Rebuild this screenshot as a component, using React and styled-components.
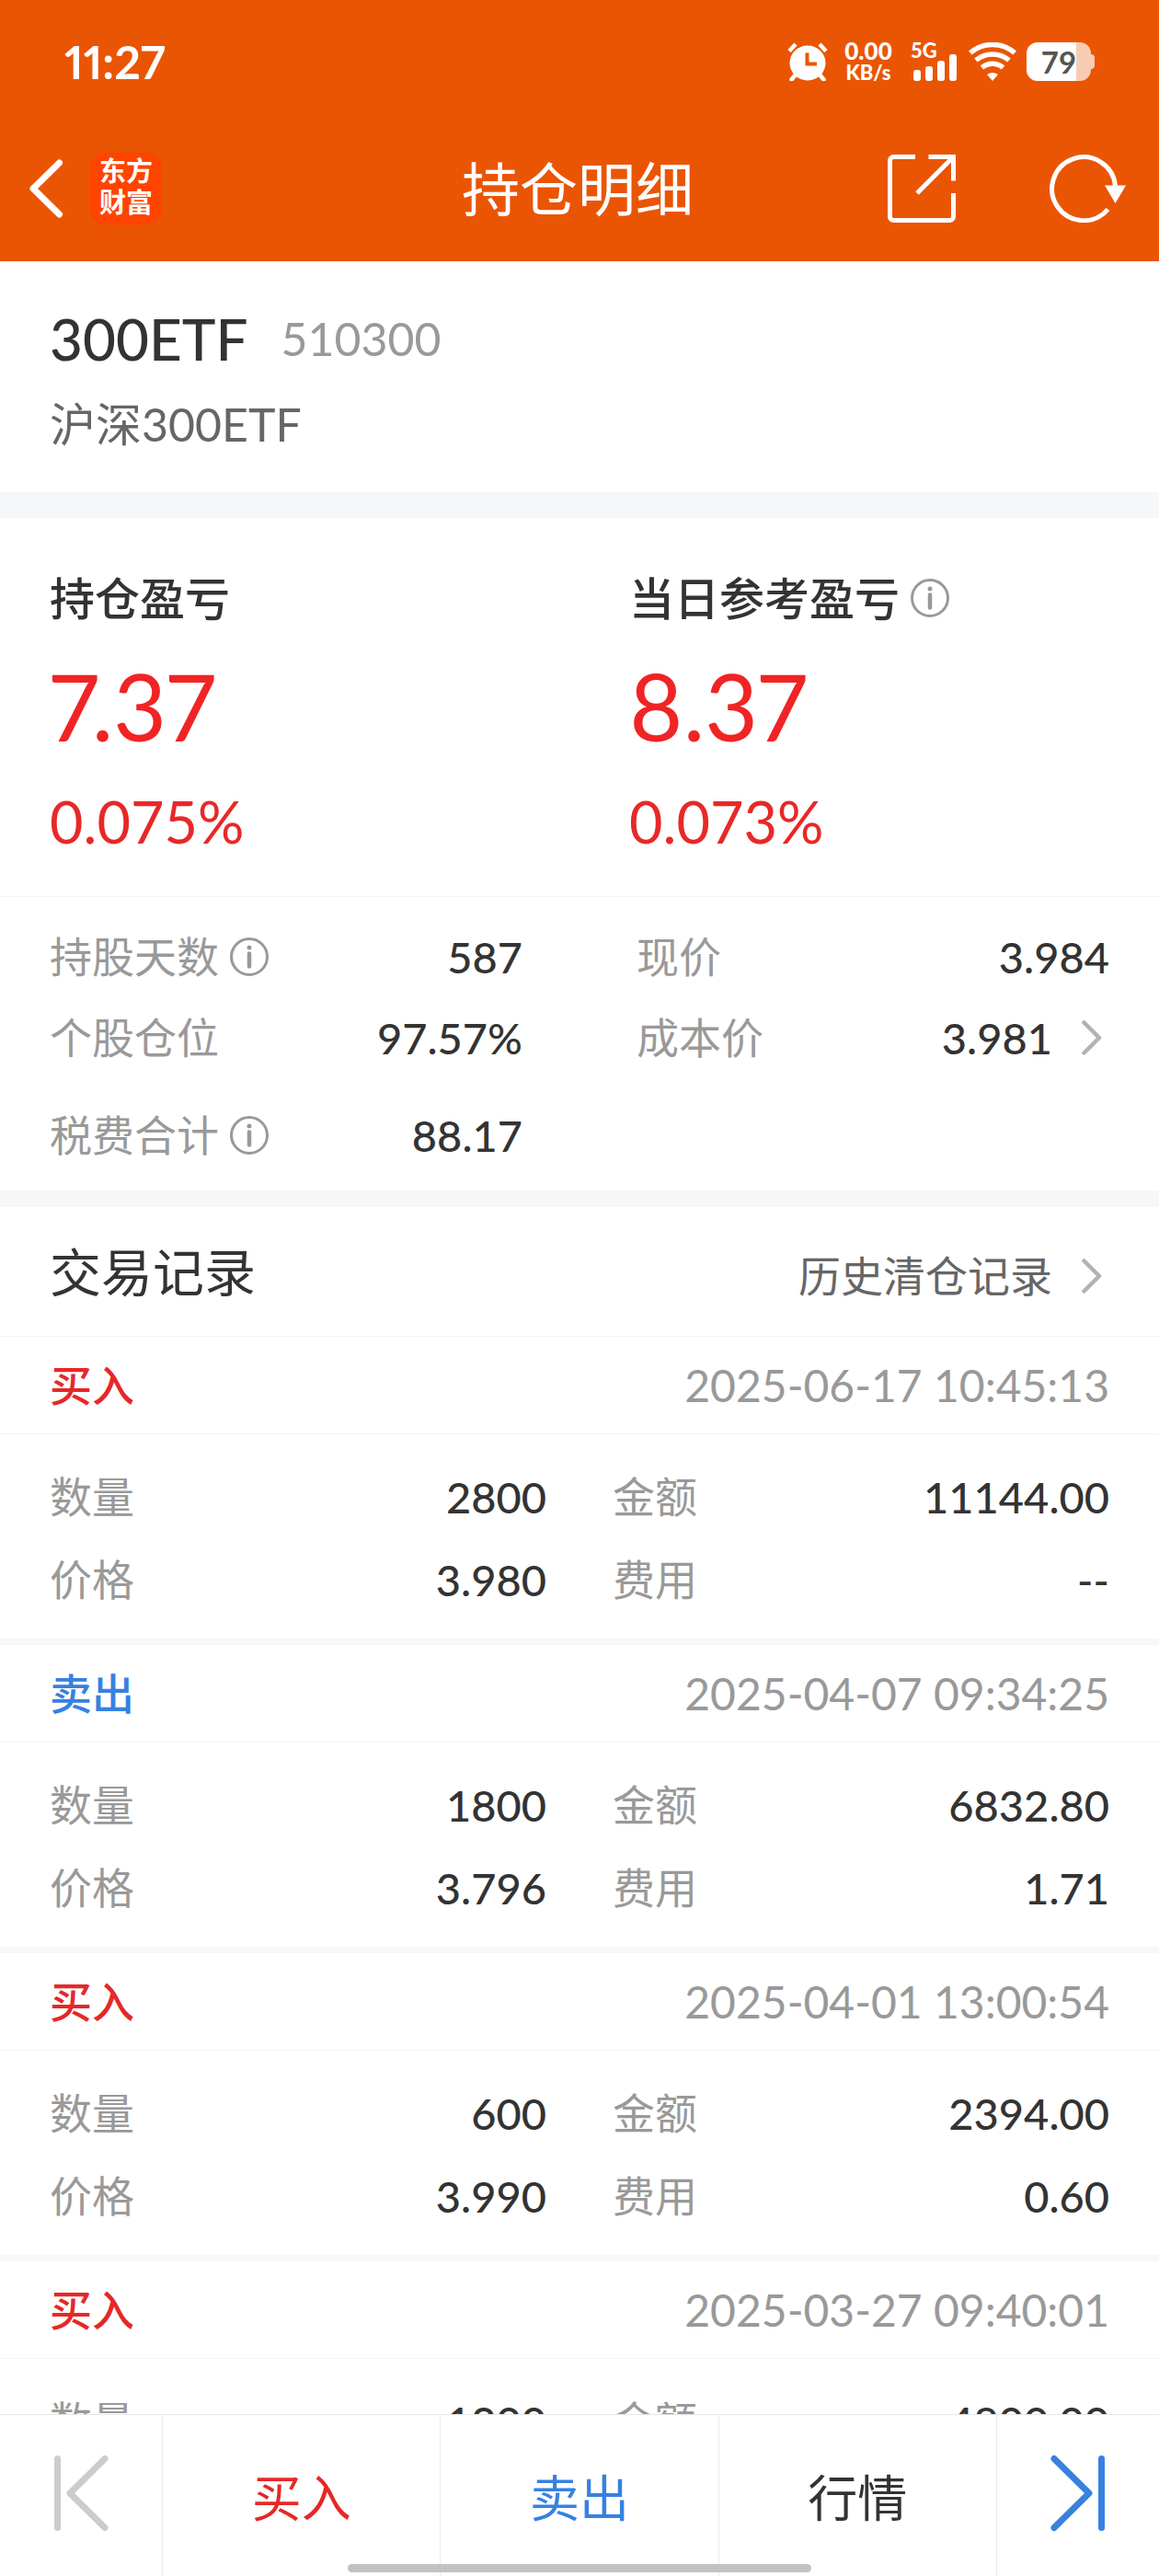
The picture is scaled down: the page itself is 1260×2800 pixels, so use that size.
import React from 'react'
import styled, { createGlobalStyle } from 'styled-components'

const position = {
    name : "300ETF",
    code : "510300",
    fullName : "沪深300ETF",
}

const profits = [
    { label : "持仓盈亏", amount : "7.37", percent : "0.075%" },
    { label : "当日参考盈亏", amount : "8.37", percent : "0.073%", info : true },
]

const details = [
    [{ label : "持股天数", value : "587", info : true }, { label : "现价", value : "3.984" }],
    [{ label : "个股仓位", value : "97.57%" }, { label : "成本价", value : "3.981", link : true }],
    [{ label : "税费合计", value : "88.17", info : true }],
]

const records = [
    { side : "buy", time : "2025-06-17 10:45:13", count : "2800", amount : "11144.00", price : "3.980", fee : "--" },
    { side : "sell", time : "2025-04-07 09:34:25", count : "1800", amount : "6832.80", price : "3.796", fee : "1.71" },
    { side : "buy", time : "2025-04-01 13:00:54", count : "600", amount : "2394.00", price : "3.990", fee : "0.60" },
    { side : "buy", time : "2025-03-27 09:40:01", count : "1200", amount : "4800.00", price : "4.000", fee : "0.60" },
]

function AlarmIcon() {
    return (
        <svg width="44" height="42" viewBox="0 0 44 42" fill="none" aria-hidden="true">
            <ellipse cx="22" cy="22.5" rx="19.5" ry="19" fill="#fff"/>
            <path d="M2 9.5 9 2M42 9.5 35 2" stroke="#fff" strokeWidth="4.5"/>
            <path d="M9 35 4.5 40.5M35 35 39.5 40.5" stroke="#fff" strokeWidth="4.5" strokeLinecap="round"/>
            <path d="M21.5 11.5V23.5H32" stroke="#ea5504" strokeWidth="4"/>
        </svg>
    )
}

function SignalIcon() {
    return (
        <svg width="50" height="42" viewBox="0 0 50 42" fill="#fff" aria-hidden="true">
            <rect x="3" y="30" width="8" height="12" rx="3"/>
            <rect x="16" y="26" width="8" height="16" rx="3"/>
            <rect x="29" y="20" width="8" height="22" rx="3"/>
            <rect x="42" y="13" width="8" height="29" rx="3"/>
        </svg>
    )
}

function WifiIcon() {
    return (
        <svg width="52" height="42" viewBox="0 0 52 42" fill="none" stroke="#fff" strokeWidth="5.5" aria-hidden="true">
            <path d="M1.8 11.5A37 37 0 0 1 50.2 11.5"/>
            <path d="M8 19.5A28 28 0 0 1 44 19.5"/>
            <path d="M14.5 27.5A18 18 0 0 1 37.5 27.5"/>
            <path d="M20 35Q26 31 32 35L26 42Z" fill="#fff" stroke="none"/>
        </svg>
    )
}

function BackIcon() {
    return (
        <svg width="38" height="64" viewBox="0 0 38 64" fill="none" aria-hidden="true">
            <path d="M33.5 4 5 32 33.5 60" stroke="#fff" strokeWidth="7" strokeLinecap="round" strokeLinejoin="round"/>
        </svg>
    )
}

function ShareIcon() {
    return (
        <svg width="74" height="74" viewBox="0 0 74 74" fill="none" stroke="#fff" strokeWidth="5" aria-hidden="true">
            <path d="M30 2.5H6.5A4 4 0 0 0 2.5 6.5V67.5A4 4 0 0 0 6.5 71.5H67.5A4 4 0 0 0 71.5 67.5V42"/>
            <path d="M44.5 2.5H71.5V28.5"/>
            <path d="M32 42 70.5 3.5"/>
        </svg>
    )
}

function RefreshIcon() {
    return (
        <svg width="84" height="74" viewBox="0 0 84 74" fill="none" aria-hidden="true">
            <path d="M71.5 34A34.5 34.5 0 1 0 63.5 59.5" stroke="#fff" strokeWidth="5"/>
            <path d="M60 33.5H83L71.5 53Z" fill="#fff"/>
        </svg>
    )
}

function InfoIcon() {
    return (
        <svg width="42" height="42" viewBox="0 0 42 42" fill="none" aria-hidden="true">
            <circle cx="21" cy="21" r="19.5" stroke="#999" strokeWidth="3"/>
            <circle cx="21" cy="11" r="2.5" fill="#999"/>
            <path d="M21 17.5V31.5" stroke="#999" strokeWidth="4.5" strokeLinecap="round"/>
        </svg>
    )
}

function ArrowIcon() {
    return (
        <svg width="22" height="38" viewBox="0 0 22 38" fill="none" aria-hidden="true">
            <path d="M2.5 2.5 19 19 2.5 35.5" stroke="#b2b2b2" strokeWidth="4.5" strokeLinecap="round" strokeLinejoin="round"/>
        </svg>
    )
}

function StepIcon({flip}) {
    return (
        <svg width="60" height="84" viewBox="0 0 60 84" fill="none" stroke="currentColor" strokeWidth="7" aria-hidden="true">
            <g transform={flip ? "matrix(-1 0 0 1 60 0)" : undefined} strokeLinecap="round" strokeLinejoin="round">
                <path d="M4.5 4.5V79.5"/>
                <path d="M56 4.5 18 42 56 79.5"/>
            </g>
        </svg>
    )
}

function Detail({label, value, info, link}) {
    return (
        <Field>
            <FieldLabel>
                {label}
                {info && <InfoButton aria-label={label}><InfoIcon/></InfoButton>}
            </FieldLabel>
            <FieldValue>
                {value}
                {link && <MoreLink href="#cost" aria-label={label}><ArrowIcon/></MoreLink>}
            </FieldValue>
        </Field>
    )
}

function Record({side, time, count, amount, price, fee}) {
    return (
        <RecordItem>
            <RecordHead>
                <Side $side={side}>{side === "buy" ? "买入" : "卖出"}</Side>
                <Time>{time}</Time>
            </RecordHead>
            <RecordBody>
                <Field><FieldLabel>数量</FieldLabel><FieldValue>{count}</FieldValue></Field>
                <Field><FieldLabel>金额</FieldLabel><FieldValue>{amount}</FieldValue></Field>
                <Field><FieldLabel>价格</FieldLabel><FieldValue>{price}</FieldValue></Field>
                <Field><FieldLabel>费用</FieldLabel><FieldValue>{fee}</FieldValue></Field>
            </RecordBody>
        </RecordItem>
    )
}

function App() {
    return (
        <Screen>
            <GlobalStyle/>
            <Header>
                <StatusBar>
                    <Clock>11:27</Clock>
                    <StatusIcons>
                        <AlarmIcon/>
                        <Speed><b>0.00</b><small>KB/s</small></Speed>
                        <Signal><SignalIcon/><Network>5G</Network></Signal>
                        <WifiIcon/>
                        <Battery><Charge>79</Charge></Battery>
                    </StatusIcons>
                </StatusBar>
                <TitleBar>
                    <TitleLeft>
                        <IconButton aria-label="返回"><BackIcon/></IconButton>
                        <Logo>东方<br/>财富</Logo>
                    </TitleLeft>
                    <Title>持仓明细</Title>
                    <TitleRight>
                        <IconButton aria-label="分享"><ShareIcon/></IconButton>
                        <IconButton aria-label="刷新"><RefreshIcon/></IconButton>
                    </TitleRight>
                </TitleBar>
            </Header>

            <Content>
                <Stock>
                    <StockLine>
                        <StockName>{position.name}</StockName>
                        <StockCode>{position.code}</StockCode>
                    </StockLine>
                    <StockFullName>{position.fullName}</StockFullName>
                </Stock>

                <Profits>
                    {profits.map(item => (
                        <Profit key={item.label}>
                            <ProfitLabel>
                                {item.label}
                                {item.info && <InfoButton aria-label={item.label}><InfoIcon/></InfoButton>}
                            </ProfitLabel>
                            <ProfitAmount>{item.amount}</ProfitAmount>
                            <ProfitPercent>{item.percent}</ProfitPercent>
                        </Profit>
                    ))}
                </Profits>

                <Details>
                    {details.map((row, i) => (
                        <DetailRow key={i} $apart={i === 2}>
                            {row.map(item => <Detail key={item.label} {...item}/>)}
                        </DetailRow>
                    ))}
                </Details>

                <SectionHead>
                    <SectionTitle>交易记录</SectionTitle>
                    <HistoryLink href="#history">历史清仓记录<MoreMark><ArrowIcon/></MoreMark></HistoryLink>
                </SectionHead>
                {records.map(item => <Record key={item.time} {...item}/>)}
            </Content>

            <BottomBar>
                <StepButton disabled aria-label="上一个"><StepIcon/></StepButton>
                <ActionButton $color="#e52828">买入</ActionButton>
                <ActionButton $color="#3781e0">卖出</ActionButton>
                <ActionButton $color="#333">行情</ActionButton>
                <StepButton aria-label="下一个"><StepIcon flip/></StepButton>
                <HomeIndicator/>
            </BottomBar>
        </Screen>
    )
}

export default App

const GlobalStyle = createGlobalStyle`
    * {
        box-sizing : border-box;
    }
    body {
        margin : 0;
        background-color : #fff;
        color : #333;
        font-family : Lato, "Noto Sans CJK SC", sans-serif;
        font-size : 46px;
    }
    h1, h2, h3, p, dl, dt, dd {
        margin : 0;
        font-weight : 400;
    }
    button {
        padding : 0;
        border : none;
        background : none;
        font-family : inherit;
        cursor : pointer;
    }
    a {
        color : inherit;
        text-decoration : none;
    }
    svg {
        display : block;
        flex-shrink : 0;
    }
`

const Screen = styled.div`
    display : flex;
    flex-direction : column;
    height : 100vh;
`

const Header = styled.header`
    flex-shrink : 0;
    background-color : #ea5504;
    color : #fff;
`

const StatusBar = styled.div`
    display : flex;
    align-items : center;
    justify-content : space-between;
    padding : 43px 70px 37px;
`

const Clock = styled.span`
    font-size : 50px;
    line-height : 48px;
    font-weight : 700;
    font-variant-numeric : proportional-nums;
`

const StatusIcons = styled.div`
    display : flex;
    align-items : center;
`

const Speed = styled.span`
    display : flex;
    flex-direction : column;
    align-items : center;
    width : 54px;
    margin : 0 19px 0 17px;
    line-height : 24px;
    font-weight : 900;
    b{
        font-size : 26px;
        font-weight : 900;
    }
    small{
        font-size : 22px;
    }
`

const Signal = styled.span`
    position : relative;
    margin-right : 13px;
`

const Network = styled.span`
    position : absolute;
    top : -2px;
    left : 0;
    font-size : 22px;
    line-height : 22px;
    font-weight : 900;
`

const Battery = styled.span`
    display : flex;
    align-items : center;
    margin-left : 11px;
    &::after{
        content : "";
        width : 4px;
        height : 16px;
        border-radius : 0 4px 4px 0;
        background-color : #f8ccb4;
    }
`

const Charge = styled.span`
    width : 70px;
    border-radius : 12px;
    background : linear-gradient(to right, #fff 54px, #f8ccb4 54px);
    color : #555;
    font-size : 33px;
    line-height : 42px;
    font-weight : 700;
    text-align : center;
`

const TitleBar = styled.div`
    display : grid;
    grid-template-columns : 1fr auto 1fr;
    align-items : center;
    height : 156px;
    padding : 0 35px 2px 31px;
`

const TitleLeft = styled.div`
    display : flex;
    align-items : center;
    gap : 29px;
`

const TitleRight = styled.div`
    display : flex;
    align-items : center;
    justify-content : flex-end;
    gap : 102px;
`

const IconButton = styled.button`
    display : flex;
`

const Logo = styled.span`
    width : 78px;
    padding : 3px 0 7px;
    border-radius : 17px;
    background-color : #ff4400;
    font-size : 29px;
    line-height : 34px;
    font-weight : 700;
    text-align : center;
`

const Title = styled.h1`
    font-size : 63px;
    line-height : 80px;
`

const Stock = styled.section`
    padding : 44px 54px 39px;
    border-bottom : 28px solid #f6f7f9;
`

const StockLine = styled.div`
    display : flex;
    align-items : center;
    gap : 36px;
    line-height : 80px;
`

const StockName = styled.h2`
    font-size : 62px;
    font-weight : 500;
`

const StockCode = styled.span`
    color : #999;
    font-size : 50px;
`

const StockFullName = styled.p`
    margin-top : 18px;
    color : #666;
    font-size : 50px;
    line-height : 70px;
`

const Content = styled.main`
    flex : 1;
    min-height : 0;
    overflow-y : auto;
    scrollbar-width : none;
`

const Profits = styled.section`
    display : grid;
    grid-template-columns : 1fr 1fr;
    padding : 52px 0 49px;
    border-bottom : 1px solid #f3f3f3;
`

const Profit = styled.div`
    padding-left : 54px;
`

const ProfitLabel = styled.h3`
    display : flex;
    align-items : center;
    gap : 12px;
    font-size : 49px;
    line-height : 70px;
    font-weight : 500;
`

const ProfitAmount = styled.p`
    margin-top : 22px;
    color : #f02424;
    font-size : 100px;
    line-height : 120px;
    font-variant-numeric : proportional-nums;
`

const ProfitPercent = styled.p`
    margin-top : 34px;
    color : #e82828;
    font-size : 63px;
    line-height : 64px;
`

const InfoButton = styled.button`
    display : flex;
`

const Details = styled.section`
    padding : 21px 54px 16px;
    border-bottom : 18px solid #f6f7f9;
`

const DetailRow = styled.dl`
    display : grid;
    grid-template-columns : 1fr 1fr;
    column-gap : 124px;
    margin-top : ${props => (props.$apart ? "18px" : "0")};
    line-height : 88px;
`

const Field = styled.div`
    display : flex;
    justify-content : space-between;
`

const FieldLabel = styled.dt`
    display : flex;
    align-items : center;
    gap : 12px;
    color : #999;
`

const FieldValue = styled.dd`
    display : flex;
    align-items : center;
    font-size : 47px;
    font-weight : 500;
`

const MoreLink = styled.a`
    display : flex;
    margin : 0 8px 0 32px;
`

const MoreMark = styled.span`
    margin : 0 8px 0 32px;
`

const SectionHead = styled.div`
    display : flex;
    align-items : baseline;
    justify-content : space-between;
    padding : 6px 54px 0;
    border-bottom : 1px solid #f3f3f3;
    line-height : 130px;
`

const SectionTitle = styled.h2`
    font-size : 56px;
`

const HistoryLink = styled.a`
    display : flex;
    align-items : center;
    color : #666;
`

const RecordItem = styled.article`
    border-bottom : 7px solid #f6f7f9;
`

const RecordHead = styled.div`
    display : flex;
    justify-content : space-between;
    padding : 0 54px;
    border-bottom : 1px solid #f3f3f3;
    line-height : 105px;
`

const Side = styled.span`
    color : ${props => (props.$side === "buy" ? "#e52828" : "#3781e0")};
    font-weight : 500;
`

const Time = styled.time`
    color : #999;
    font-size : 48px;
`

const RecordBody = styled.dl`
    display : grid;
    grid-template-columns : 1fr 1fr;
    column-gap : 72px;
    padding : 23px 54px 19px;
    line-height : 90px;
`

const BottomBar = styled.nav`
    position : relative;
    display : flex;
    flex-shrink : 0;
    height : 176px;
    border-top : 1px solid #e6e6e6;
    background-color : #fff;
`

const StepButton = styled.button`
    display : flex;
    align-items : center;
    justify-content : center;
    width : 176px;
    padding-bottom : 6px;
    color : #3781e0;
    &:disabled{
        color : #ccc;
        cursor : default;
    }
`

const ActionButton = styled.button`
    flex : 1;
    border-left : 1px solid #ebebeb;
    color : ${props => props.$color};
    font-size : 54px;
    &:nth-child(4){
        border-right : 1px solid #ebebeb;
    }
`

const HomeIndicator = styled.span`
    position : absolute;
    bottom : 4px;
    left : 30%;
    right : 30%;
    height : 9px;
    border-radius : 5px;
    background-color : #c2c2c2;
`
